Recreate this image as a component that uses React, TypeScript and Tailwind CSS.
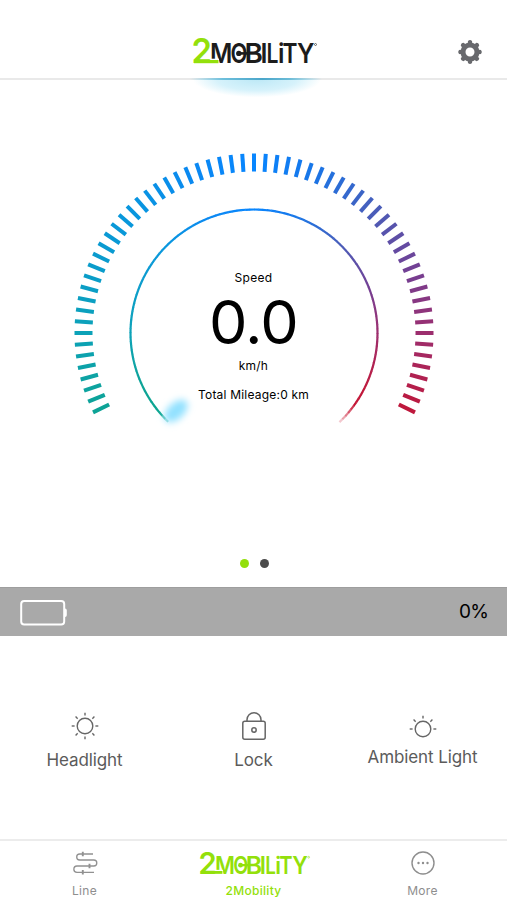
import React from 'react';
import { clsx } from 'clsx';

type Stop = [number, number, number, number];

// angle (0 = top, clockwise), r, g, b
const stops: Stop[] = [
    [-137, 10, 166, 140],
    [-116, 13, 163, 150],
    [-90, 12, 162, 184],
    [-45, 8, 150, 222],
    [-20, 10, 136, 242],
    [0, 8, 134, 255],
    [20, 24, 118, 232],
    [45, 74, 92, 184],
    [70, 118, 62, 145],
    [90, 156, 46, 110],
    [116, 190, 24, 60],
    [137, 205, 20, 45],
];

const colorAt = (angle: number) => {
    const i = Math.max(1, stops.findIndex((s) => s[0] >= angle));
    const a = stops[i - 1];
    const b = stops[i];
    const t = (angle - a[0]) / (b[0] - a[0]);
    const mix = (k: number) => Math.round(a[k] + (b[k] - a[k]) * t);
    return `rgb(${mix(1)},${mix(2)},${mix(3)})`;
};

const point = (angle: number, r: number) => {
    const rad = (angle * Math.PI) / 180;
    return [180 + r * Math.sin(rad), 180 - r * Math.cos(rad)];
};

const ticks = Array.from({ length: 63 }, (_, i) => (i - 31) * 3.75);
const arcSteps = Array.from({ length: 136 }, (_, i) => -136 + i * 2);

const logoLetters: { char: string; x: number; width: number }[] = [
    { char: 'M', x: 19, width: 22.4 },
    { char: 'O', x: 39.6, width: 17 },
    { char: 'B', x: 53.6, width: 18.4 },
    { char: 'I', x: 69.6, width: 7 },
    { char: 'L', x: 75.6, width: 12 },
    { char: 'i', x: 87, width: 6.5 },
    { char: 'T', x: 91.4, width: 15 },
    { char: 'Y', x: 106, width: 17.5 },
];

interface LogoProps {
    className: string;
    ink: string;
    accent: string;
}

const Logo: React.FC<LogoProps> = ({ className, ink, accent }) => (
    <svg viewBox="0 0 126 28" className={clsx('overflow-visible', className)} fontFamily="Inter, sans-serif">
        {logoLetters.map((l) => (
            <text
                key={l.char}
                x={l.x}
                y="26.2"
                fontSize="27"
                fontWeight="600"
                fill={ink}
                textLength={l.width}
                lengthAdjust="spacingAndGlyphs"
            >
                {l.char}
            </text>
        ))}
        {/* Underline of the 2 cuts off the left foot of the M */}
        <path d="M19 24.2H28" stroke="#fff" strokeWidth="5" />
        <text x="0.6" y="26.2" fontSize="34" fontWeight="600" fill={accent} textLength="20.5" lengthAdjust="spacingAndGlyphs">2</text>
        <path d="M3 24.6H27.5" stroke={accent} strokeWidth="3.2" />
        {/* Connector between the round letters */}
        <path d="M48 16.4H66" stroke={ink} strokeWidth="2.6" />
        <circle cx="47.8" cy="16.4" r="2.7" fill={ink} />
        <circle cx="124.5" cy="7.5" r="1" fill="none" stroke={ink} strokeWidth="0.6" />
    </svg>
);

const Gear = () => (
    <svg viewBox="0 0 26 26" className="size-[26px]">
        {[0, 45, 90, 135, 180, 225, 270, 315].map((a) => (
            <path key={a} d="M10.5 6L11 2Q13 .2 15 2L15.5 6Z" fill="#68696d" transform={`rotate(${a} 13 13)`} />
        ))}
        <circle cx="13" cy="13" r="7" fill="none" stroke="#68696d" strokeWidth="5" />
    </svg>
);

const Sun: React.FC<{ half?: boolean }> = ({ half }) => {
    const rays = half ? [-90, -45, 0, 45, 90] : [0, 45, 90, 135, 180, 225, 270, 315];
    return (
        <svg viewBox="0 0 30 30" className="size-[30px]" fill="none" stroke="#666" strokeWidth="1.4">
            <circle cx="15" cy="15" r="7.8" />
            {rays.map((a) => (
                <path key={a} d="M15 1.7V4.6" transform={`rotate(${a} 15 15)`} />
            ))}
        </svg>
    );
};

const LockIcon = () => (
    <svg viewBox="0 0 26 30" className="h-[30px] w-[26px]" fill="none" stroke="#666" strokeWidth="1.5">
        <rect x="1.8" y="10.2" width="22.4" height="18" rx="2" />
        <path d="M6 10V8.7A7 7 0 0 1 20 8.7V10" />
        <circle cx="13" cy="19" r="2.2" />
    </svg>
);

const RouteIcon = () => (
    <svg viewBox="0 0 26 26" className="size-[26px]" fill="none" stroke="#919191" strokeWidth="1.3">
        <path d="M21 4H7.7A3 3 0 0 0 7.7 10H21.8A3 3 0 0 1 21.8 16H5A3.15 3.15 0 0 0 5 22.3H22" />
        <path d="M10.8 1.8V6.2M17.5 13.8V18.2M10.8 20.1V24.5" strokeWidth="1.9" />
    </svg>
);

const MoreIcon = () => (
    <svg viewBox="0 0 26 26" className="size-[26px]" fill="none" stroke="#8e8e8e" strokeWidth="1.4">
        <circle cx="13" cy="13" r="11" />
        {[8.5, 13, 17.5].map((x) => (
            <circle key={x} cx={x} cy="13" r="1.2" fill="#8e8e8e" stroke="none" />
        ))}
    </svg>
);

const Gauge = () => (
    <svg viewBox="0 0 360 280" className="col-start-1 row-start-1 h-[280px] w-[360px]">
        <defs>
            <filter id="glow" x="-80%" y="-80%" width="260%" height="260%">
                <feGaussianBlur stdDeviation="3.6" />
            </filter>
        </defs>
        {ticks.map((a) => {
            const [x1, y1] = point(a, 161.5);
            const [x2, y2] = point(a, 179.5);
            return <line key={a} x1={x1} y1={y1} x2={x2} y2={y2} stroke={colorAt(a)} strokeWidth="4" />;
        })}
        {arcSteps.map((a) => {
            const [x1, y1] = point(a, 123.5);
            const [x2, y2] = point(a + 2.2, 123.5);
            const opacity = a > 0 ? Math.min(1, (137 - a) / 13) : Math.min(1, (a + 139) / 7);
            return (
                <line key={a} x1={x1} y1={y1} x2={x2} y2={y2} stroke={colorAt(Math.min(a + 1, 136))} strokeWidth="2.2" opacity={opacity} />
            );
        })}
        <ellipse cx="102" cy="258" rx="14" ry="8" fill="#92e1ff" transform="rotate(-43 102 258)" filter="url(#glow)" />
    </svg>
);

const controls = [
    { label: 'Headlight', icon: <Sun />, className: 'gap-[7px] pt-[75px]' },
    { label: 'Lock', icon: <LockIcon />, className: 'gap-[7px] pt-[75px]' },
    { label: 'Ambient Light', icon: <Sun half />, className: 'gap-px pt-[78px]' },
];

export default function App() {
    return (
        <div className="flex h-[900px] w-[507px] flex-col overflow-hidden bg-white font-[Inter,sans-serif] text-black">
            {/* Header */}
            <header className="relative grid h-20 grid-cols-3 items-start border-b-2 border-[#e9e9e9]">
                <div />
                <Logo className="mt-[37px] h-7 w-[126px] justify-self-center" ink="#1c1c1c" accent="#93e00b" />
                <div className="mt-[39px] mr-6 justify-self-end">
                    <Gear />
                </div>
                <div className="absolute top-[79px] left-[194px] h-[18px] w-[126px] bg-[radial-gradient(ellipse_at_top,#bce8f6_0%,#d6f2fb_45%,transparent_72%)]" />
                <div className="absolute top-[78px] left-[190px] h-0.5 w-[132px] bg-[linear-gradient(90deg,transparent,#6dbfdc_25%,#4ba6ca_55%,#6abbd7_75%,transparent)]" />
            </header>

            {/* Speed */}
            <main className="flex h-[507px] flex-col items-center pt-[73px]">
                <div className="grid">
                    <Gauge />
                    <div className="col-start-1 row-start-1 flex flex-col items-center pt-[117px]">
                        <span className="text-xs leading-4 tracking-[0.3px]">Speed</span>
                        <span className="mt-1.5 text-[61px] leading-[60px] font-normal tracking-[-0.8px]">0.0</span>
                        <span className="mt-1.5 text-xs leading-4 tracking-[0.2px]">km/h</span>
                        <span className="mt-[13px] text-xs leading-4 tracking-[0.2px]">Total Mileage:0 km</span>
                    </div>
                </div>
                <div className="mt-[126px] ml-px flex gap-[11px]">
                    <span className="size-[9px] rounded-full bg-[#93df0b]" />
                    <span className="size-[9px] rounded-full bg-[#4b4b4b]" />
                </div>
            </main>

            {/* Battery */}
            <section className="flex h-[49px] items-center justify-between border-t border-[#9e9e9e] bg-[#a9a9a9] pt-px pr-[19px] pl-5">
                <svg viewBox="0 0 48 26" className="h-[26px] w-12">
                    <rect x="1.2" y="1" width="43" height="23.5" rx="3" fill="none" stroke="#fff" strokeWidth="2" />
                    <path d="M45 8.5Q46.8 8.5 46.8 10.5V15Q46.8 17 45 17Z" fill="#fff" />
                </svg>
                <span className="text-[19px] tracking-[-0.8px]">0%</span>
            </section>

            {/* Controls */}
            <section className="grid h-[203px] grid-cols-3">
                {controls.map((c) => (
                    <div key={c.label} className={clsx('flex flex-col items-center text-[#5b5b5b]', c.className)}>
                        {c.icon}
                        <span className="text-[17px] leading-6 tracking-[-0.1px]">{c.label}</span>
                    </div>
                ))}
            </section>

            {/* Tab bar */}
            <nav className="grid h-[61px] grid-cols-3 border-t-2 border-[#ececec] text-xs leading-4 text-[#8e8e8e]">
                <div className="flex flex-col items-center gap-[7px] pt-[9px]">
                    <RouteIcon />
                    <span className="tracking-[0.3px]">Line</span>
                </div>
                <div className="flex flex-col items-center gap-[7px] pt-[9px] text-[#93e00b]">
                    <Logo className="h-[26px] w-[112px]" ink="#93e00b" accent="#93e00b" />
                    <span className="font-medium tracking-[0.3px]">2Mobility</span>
                </div>
                <div className="flex flex-col items-center gap-[7px] pt-[9px]">
                    <MoreIcon />
                    <span className="tracking-[0.3px]">More</span>
                </div>
            </nav>
        </div>
    );
}
